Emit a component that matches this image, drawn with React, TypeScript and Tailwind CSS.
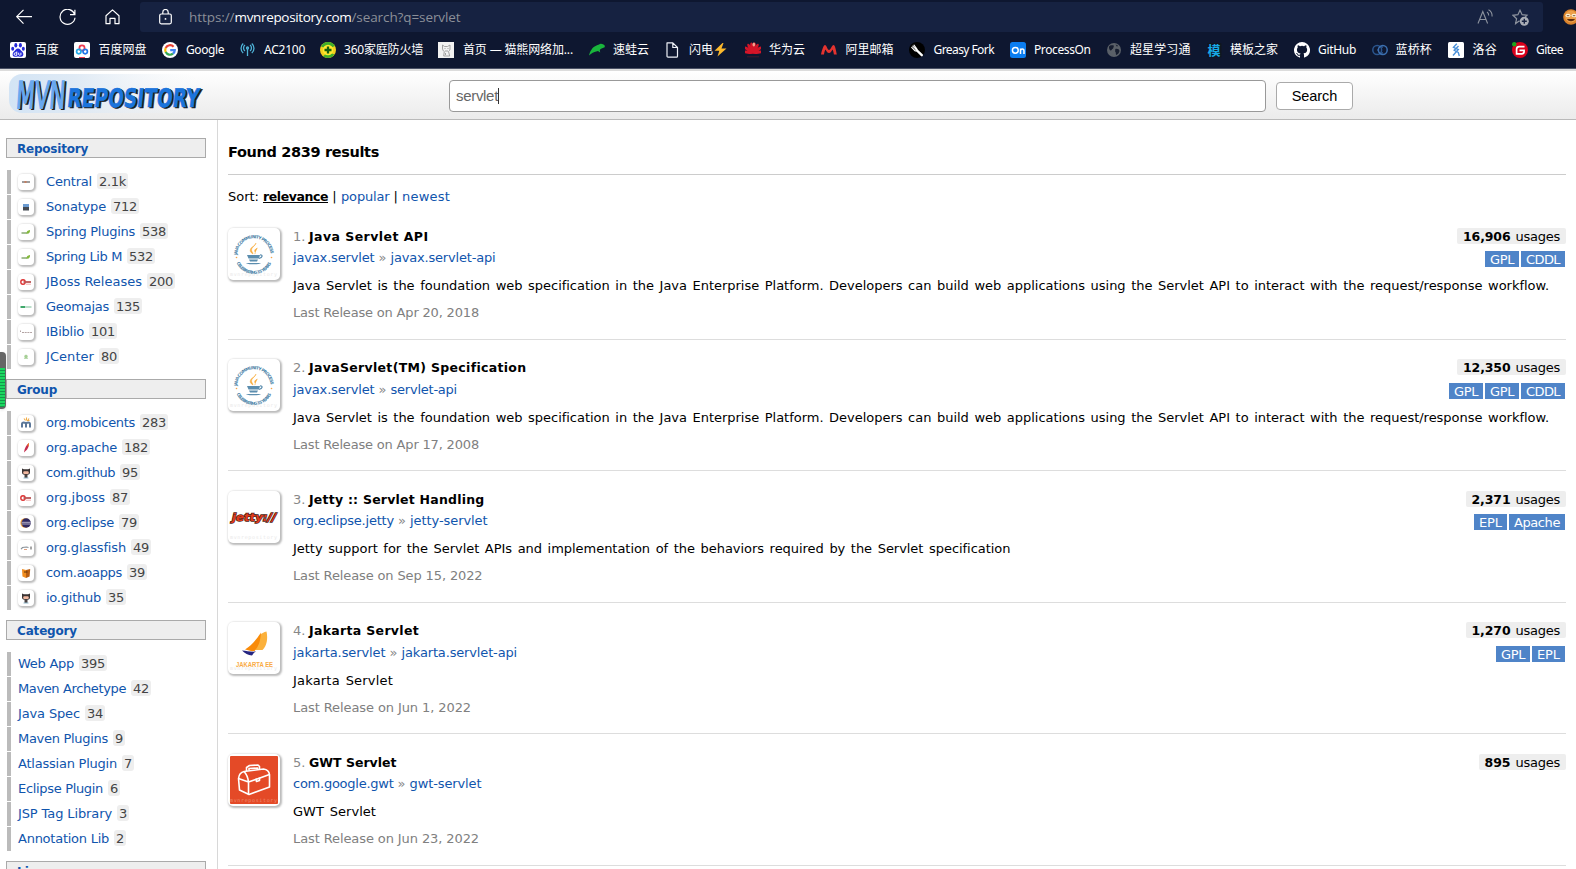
import React, { useLayoutEffect, useRef, useState } from "react";

const LINK = "text-[#1055ad]";

/** Spreads its text over an exact width by adjusting the tracking. */
function FitText({ w, className = "", children }: { w: number; className?: string; children: string }) {
  const ref = useRef<HTMLSpanElement>(null);
  const [spacing, setSpacing] = useState(0);
  useLayoutEffect(() => {
    if (!ref.current) return;
    ref.current.style.letterSpacing = "0px";
    const natural = ref.current.getBoundingClientRect().width;
    const next = (w - natural) / Math.max(1, Array.from(children).length);
    ref.current.style.letterSpacing = next + "px";
    setSpacing(next);
  }, [w, children]);
  return (
    <span className="inline-block shrink-0 whitespace-pre" style={{ width: w }}>
      <span ref={ref} className={className} style={{ letterSpacing: spacing }}>
        {children}
      </span>
    </span>
  );
}

/* ---------- bookmark icons (16 x 16) ---------- */

const bookmarkIcons: Record<string, React.ReactNode> = {
  baidu: (
    <>
      <rect width="16" height="16" rx="2" fill="#fff" />
      <g fill="#2529d8">
        <ellipse cx="5.8" cy="3.2" rx="1.5" ry="2.2" />
        <ellipse cx="10.4" cy="3.2" rx="1.5" ry="2.2" />
        <ellipse cx="2.7" cy="6.8" rx="1.5" ry="2" />
        <ellipse cx="13.3" cy="6.8" rx="1.5" ry="2" />
        <path d="M8 6.4c2 0 2.4 1.8 4 3.2 2.200 2 1.600 5.200-.8 5.200-1.300 0-2-.4-3.200-.4s-1.900.4-3.200.4c-2.400 0-3-3.200-.8-5.200C5.600 8.200 6 6.400 8 6.400z" />
      </g>
      <path d="M6.800 9.500v3.800H5.300a1.200 1.200 0 0 1 0-2.400h1.500M8.700 10.700v1.900c0 .8 2.200.8 2.200 0v-1.900" stroke="#fff" fill="none" />
    </>
  ),
  pan: (
    <>
      <rect width="16" height="16" rx="2" fill="#fff" />
      <circle cx="8" cy="6" r="2.600" fill="none" stroke="#ee3a50" strokeWidth="1.700" />
      <circle cx="4.800" cy="9.600" r="2.200" fill="none" stroke="#22a9e8" strokeWidth="1.700" />
      <circle cx="11.200" cy="9.600" r="2.200" fill="none" stroke="#2377e8" strokeWidth="1.700" />
      <path d="M5 15.500h6" stroke="#ee3a50" />
    </>
  ),
  google: (
    <>
      <circle cx="8" cy="8" r="8" fill="#fff" />
      <g fill="none" strokeWidth="2.200">
        <path d="M11.600 4.700A4.800 4.800 0 0 0 3.700 6" stroke="#ea4335" />
        <path d="M3.700 6a4.800 4.800 0 0 0 0 4.200" stroke="#fbbc05" />
        <path d="M3.700 10.100A4.800 4.800 0 0 0 11 11.700" stroke="#34a853" />
        <path d="M8.200 8.100h4.600a4.800 4.800 0 0 1-1.800 3.600" stroke="#4285f4" />
      </g>
    </>
  ),
  antenna: (
    <g fill="none" stroke="#4fb4d8" strokeWidth="1.300">
      <path d="M7.500 7v7" />
      <circle cx="7.500" cy="6" r="1" />
      <path d="M5 9a3.800 3.800 0 0 1 0-6M10 9a3.800 3.800 0 0 0 0-6M3.200 11a6.400 6.400 0 0 1 0-9.600M11.800 11a6.400 6.400 0 0 0 0-9.600" />
    </g>
  ),
  shield: (
    <>
      <circle cx="8" cy="8" r="8" fill="#f2cf1d" />
      <path d="M1 4.500A8 8 0 0 1 15 4L8 7zM14.500 12.500A8 8 0 0 1 3 14.200L8 10z" fill="#3fae2a" />
      <circle cx="8" cy="8" r="5.200" fill="#ffe92e" />
      <path d="M8 4.500v7M4.500 8h7" stroke="#14600f" strokeWidth="2.300" />
    </>
  ),
  cat: (
    <>
      <rect width="16" height="16" fill="#f2f2f2" />
      <path d="M4.500 6V3l2 1.500h3L12 3v4c0 1.500-1 2-1.500 2.500l1.200 4.500h-6l.6-4.500C5 9 4.500 7.500 4.500 6zM6.500 6.500h1M9.500 6.500h1M7 9h3M7.500 11v2" fill="none" stroke="#999" strokeWidth=".9" />
    </>
  ),
  frog: (
    <path d="M0 13.500C1 9 3.500 4.800 7.500 3.400c1.500-.4 2.500-1.200 4-1.700 1-.2 2 .4 3 .9 1.600.8 1.700 2.600.6 3-1.800.8-3.200.8-4.300 2.400l.4 2.600-2.200-1.500-1.800.4C5 10.300 2.500 11 0 13.500z" fill="#19b53c" />
  ),
  page: (
    <path d="M2 .8h5.800L12.500 5.500v8.700a1 1 0 0 1-1 1H3a1 1 0 0 1-1-1zM7.800.8v4.700h4.700" fill="none" stroke="#eef1f7" strokeWidth="1.200" strokeLinejoin="round" />
  ),
  huawei: (
    <g fill="#d41528">
      {[-82, -55, -30, -10, 10, 30, 55, 82].map((a) => (
        <ellipse key={a} cx="8" cy="5.800" rx="1.600" ry="5.400" transform={`rotate(${a} 8 11)`} />
      ))}
      <path d="M2 14.800h12" stroke="#4d1a2b" strokeWidth=".8" />
      <ellipse cx="8.800" cy="2.600" rx="1.300" ry="2" fill="#f7a08c" />
    </g>
  ),
  ali: <path d="M0 12.500C1 8 2.500 3 4 3s2.500 5 4 5 3-5 4.500-5S15 8 15.800 12.500h-2.900c-.3-2-.7-4-1.400-5C10.500 9.300 9.600 11 8 11S5.500 9.300 4.500 7.500c-.8 1.200-1.200 3-1.500 5z" fill="#e5332f" />,
  fork: (
    <>
      <circle cx="8" cy="8" r="8" fill="#000" />
      <path d="M7.500 8l5.300 5.200" stroke="#fff" strokeWidth="2.400" strokeLinecap="round" />
      <path d="M2.700 5.300L6 8.700c1.200.8 2.600-.6 1.800-1.800L5 3.200M3.800 4.200l3 3" stroke="#fff" strokeWidth="1.100" fill="none" strokeLinecap="round" />
    </>
  ),
  on: (
    <>
      <rect width="16" height="16" rx="2.500" fill="#0b7df0" />
      <circle cx="5.300" cy="8.300" r="2.900" fill="none" stroke="#fff" strokeWidth="1.500" />
      <path d="M10.500 12V6.400M10.500 9c0-2.600 3.500-2.600 3.500 0v3" fill="none" stroke="#fff" strokeWidth="1.500" />
    </>
  ),
  globe: (
    <>
      <circle cx="7" cy="8" r="7" fill="#5a6068" />
      <path d="M2 4.500c1.500-2 3-1 4.500-1.300 1 1.500-.5 2.300-.5 3.500-1.500.2-1 2-2.500 1.800C2.500 8 1.800 6 2 4.500zM8.300 7c2-.6 4 .2 4.200 2-.4 2-2 3.800-3.400 4-.6-1.500.2-2.500-1-3.600zM8.500 2.500l2.500 1-1 1.300z" fill="#161d2f" />
    </>
  ),
  mo: <rect x="0" y="1" width="14.500" height="14.500" rx="1" fill="#10161f" />,
  github: (
    <path
      fill="#fff"
      d="M8 0a8 8 0 0 0-2.530 15.590c.4.070.550-.170.550-.380v-1.490c-2.010.370-2.530-.490-2.690-.940-.090-.230-.480-.940-.820-1.130-.280-.150-.680-.520-.010-.530.630-.010 1.080.580 1.230.820.720 1.210 1.870.870 2.330.660.070-.520.280-.870.510-1.070-1.780-.2-3.640-.890-3.640-3.950 0-.870.310-1.590.820-2.150-.080-.2-.360-1.020.080-2.120 0 0 .670-.210 2.200.820a7.600 7.600 0 0 1 4 0c1.530-1.040 2.200-.820 2.200-.820.440 1.100.160 1.920.080 2.120.510.560.820 1.270.820 2.150 0 3.070-1.870 3.750-3.650 3.950.290.250.540.730.540 1.480v2.200c0 .210.150.460.550.380A8 8 0 0 0 8 0z"
    />
  ),
  rings: (
    <g fill="none" stroke="#3b6fb0" strokeWidth="1.500">
      <circle cx="5.200" cy="8" r="4.400" stroke="#2b568f" />
      <circle cx="10.800" cy="8" r="4.400" />
      <path d="M11 5.200a3.300 3.300 0 1 0 0 5.600" stroke="#3b6fb0" strokeWidth="1" />
    </g>
  ),
  luogu: (
    <>
      <rect width="16" height="16" rx="1.500" fill="#fff" />
      <path d="M8.800 1.800L5.500 5.300l4.800 2.200L5 13.500M5.500 8l4.800 2.500 1 3.500M10.500 4L6 8.500" stroke="#4a90d9" strokeWidth="1.400" fill="none" />
    </>
  ),
  gitee: (
    <>
      <circle cx="8" cy="8" r="8" fill="#d9001b" />
      <path d="M12.500 4.600H7.200A2.600 2.600 0 0 0 4.600 7.200v4.600h5.200a2.300 2.300 0 0 0 2.300-2.300V8.300H7.500" fill="none" stroke="#fff" strokeWidth="1.700" />
      <circle cx="2.200" cy="2.200" r="2.200" fill="#1ba51b" />
    </>
  ),
};

type Bookmark = { icon: string; label: string; x: number; textX: number; end: number };

const bookmarks: Bookmark[] = [
  { icon: "baidu", label: "百度", x: 10, textX: 35, end: 58.500 },
  { icon: "pan", label: "百度网盘", x: 74, textX: 98.500, end: 146.500 },
  { icon: "google", label: "Google", x: 162, textX: 186, end: 224 },
  { icon: "antenna", label: "AC2100", x: 240, textX: 264, end: 305 },
  { icon: "shield", label: "360家庭防火墙", x: 320, textX: 344, end: 423 },
  { icon: "cat", label: "首页 — 猫熊网络加...", x: 438, textX: 463, end: 573 },
  { icon: "frog", label: "速蛙云", x: 589, textX: 613, end: 649 },
  { icon: "page", label: "闪电", x: 665, textX: 689, end: 713 },
  { icon: "huawei", label: "华为云", x: 745, textX: 769, end: 805 },
  { icon: "ali", label: "阿里邮箱", x: 821, textX: 845.500, end: 893.500 },
  { icon: "fork", label: "Greasy Fork", x: 909, textX: 933.500, end: 994 },
  { icon: "on", label: "ProcessOn", x: 1010, textX: 1034, end: 1090.500 },
  { icon: "globe", label: "超星学习通", x: 1107, textX: 1130, end: 1190.500 },
  { icon: "mo", label: "模板之家", x: 1206.500, textX: 1230, end: 1278 },
  { icon: "github", label: "GitHub", x: 1294, textX: 1318, end: 1356 },
  { icon: "rings", label: "蓝桥杯", x: 1372, textX: 1395.500, end: 1432 },
  { icon: "luogu", label: "洛谷", x: 1448, textX: 1472.500, end: 1497 },
  { icon: "gitee", label: "Gitee", x: 1512, textX: 1536, end: 1563 },
];

function BookmarkBar() {
  return (
    <div className="flex h-9 items-center pl-[10px] font-['Noto_Sans','Noto_Sans_CJK_SC',sans-serif] text-[12px] leading-[18px] text-white">
      {bookmarks.map((b, i) => {
        const next = bookmarks[i + 1];
        return (
          <a key={b.label} className="flex shrink-0 items-center" style={{ width: (next ? next.x : 1576) - b.x }}>
            <span className="relative h-4 shrink-0" style={{ width: b.textX - b.x }}>
              <svg width="16" height="16" viewBox="0 0 16 16">
                {bookmarkIcons[b.icon]}
              </svg>
              {b.icon === "mo" && (
                <span className="absolute left-px top-0 text-[13px] font-bold leading-4 text-[#17a9e6]">模</span>
              )}
            </span>
            <FitText w={b.end - b.textX}>{b.label}</FitText>
            {b.icon === "page" && (
              <svg width="13" height="14" viewBox="0 0 13 14" className="ml-px" aria-label="⚡">
                <path d="M8.500 0L0.500 7.800h4.800L3.500 13.500 12.500 5.500H7.500L9.500 0z" fill="#fcb92c" />
              </svg>
            )}
          </a>
        );
      })}
    </div>
  );
}

function AddressBar() {
  return (
    <div className="flex h-8 pt-[2px]">
      <div className="flex w-[140px] shrink-0 items-center pl-4 text-white">
        <svg width="16" height="16" viewBox="0 0 16 16" fill="none" stroke="currentColor" strokeWidth="1.200">
          <path d="M7.500.8L.7 7.700l6.800 6.900M.7 7.700H16" />
        </svg>
        <svg width="17" height="17" viewBox="0 0 17 17" className="ml-[27px]" fill="none" stroke="currentColor" strokeWidth="1.200">
          <path d="M15.700 5.500A7.500 7.500 0 1 0 16 8.700M15.900.800v4.900H11" />
        </svg>
        <svg width="15" height="16" viewBox="0 0 15 16" className="ml-[28.500px]" fill="none" stroke="currentColor" strokeWidth="1.200" strokeLinejoin="round">
          <path d="M1 6.700L7.500.900 14 6.700v8h-4V9.300H5v5.400H1z" />
        </svg>
      </div>
      <div className="flex h-[30px] w-[1403px] shrink-0 items-center rounded-[3px] bg-[#162241] pl-[19px]">
        <svg width="13" height="16" viewBox="0 0 13 16" fill="none" stroke="#fff" strokeWidth="1.200">
          <rect x=".700" y="5" width="11.600" height="9.800" rx="1.500" />
          <path d="M3.800 5V3.200a2.700 2.700 0 0 1 5.400 0V5" />
          <circle cx="6.500" cy="9.900" r=".9" fill="#fff" stroke="none" />
        </svg>
        <div className="ml-[17px] flex font-['Open_Sans',sans-serif] text-[13.500px] leading-5 text-[#8b8f98]">
          <FitText w={45.500}>https://</FitText>
          <FitText w={117} className="text-white">mvnrepository.com</FitText>
          <FitText w={109}>/search?q=servlet</FitText>
        </div>
        <svg width="17" height="16" viewBox="0 0 17 16" className="ml-auto mr-[18px]" fill="none" stroke="#8d939e" strokeWidth="1.100">
          <path d="M1 14.500L5.800 2.500l4.800 12M2.700 10.500h6.200M10 3c1.300.800 1.800 2 1.700 3.500M11.500.7c2.500 1.300 3.800 3.600 3.600 6.800" />
        </svg>
        <svg width="17" height="17" viewBox="0 0 17 17" className="mr-[14px]" fill="none" stroke="#8d939e" strokeWidth="1.200">
          <path d="M7.500 11.800L3.600 14.600 4.600 9.700 1 6.300l4.900-.6L8 1.200l2.100 4.500 4.900.600-1.800 1.700" />
          <circle cx="12.300" cy="12.300" r="4.500" fill="#a9adb5" stroke="none" />
          <path d="M12.300 9.800v5M9.800 12.300h5" stroke="#162241" strokeWidth="1.400" />
        </svg>
      </div>
      <svg width="16" height="16" viewBox="0 0 16 16" className="ml-5 mt-[7px] shrink-0">
        <circle cx="8" cy="8" r="7.800" fill="#d9822b" />
        <circle cx="8" cy="7.500" r="6" fill="#eda04a" />
        <ellipse cx="5" cy="6.500" rx="2.500" ry="1.700" fill="#fff3d6" />
        <ellipse cx="11" cy="6.500" rx="2.500" ry="1.700" fill="#fff3d6" />
        <path d="M4 10c1.500 3 6.500 3 8 0z" fill="#5c2c0e" />
        <path d="M3.800 6.700h2.500M9.800 6.700h2.500" stroke="#5c2c0e" strokeWidth=".8" />
      </svg>
    </div>
  );
}

function SiteLogo() {
  return (
    <svg width="200" height="40" viewBox="0 0 200 40" className="ml-[9px] mt-[3px] shrink-0 overflow-visible">
      <defs>
        <linearGradient id="glow" x1="0" x2="1" y1="0" y2="0">
          <stop offset="0" stopColor="#d3e4f5" />
          <stop offset=".35" stopColor="#dce8f4" stopOpacity=".9" />
          <stop offset="1" stopColor="#f0f4f8" stopOpacity="0" />
        </linearGradient>
      </defs>
      <rect width="190" height="39" rx="13" fill="url(#glow)" />
      <g fontFamily="'DejaVu Sans',sans-serif">
        {[
          { dx: 1.700, dy: 1.200, a: "#1c1c1c", b: "#1c1c1c" },
          { dx: 0, dy: 0, a: "#68a8ef", b: "#1b74dc" },
        ].map((l, i) => (
          <g key={i} transform={`translate(${l.dx} ${l.dy})`}>
            <g transform="translate(6.500 33.500) skewX(-4) scale(1 1.360)">
              <text fontSize="27" textLength="49" lengthAdjust="spacingAndGlyphs" fill={l.a} stroke={l.a} strokeWidth="1.300">
                MVN
              </text>
            </g>
            <g transform="translate(57.500 33.200) skewX(-6)">
              <text fontSize="25.500" textLength="132" lengthAdjust="spacingAndGlyphs" fontWeight="bold" fill={l.b} stroke={l.b} strokeWidth=".700">
                REPOSITORY
              </text>
            </g>
          </g>
        ))}
      </g>
    </svg>
  );
}

function SiteHeader() {
  return (
    <header className="flex h-[51px] border-b border-t-2 border-b-[#b9b9b9] border-t-[#dcdcdc] bg-gradient-to-b from-white to-[#ebebeb] font-['Liberation_Sans',sans-serif] text-[14px]">
      <div className="w-[449px] shrink-0">
        <SiteLogo />
      </div>
      <div className="mt-[9px] flex h-8 w-[817px] shrink-0 items-center rounded-[4px] border border-[#999] bg-white pl-[6px] text-[15px] text-[#666]">
        <FitText w={42}>servlet</FitText>
        <span className="h-4 w-px bg-[#333]" />
      </div>
      <button className="ml-[10px] mt-[11px] flex h-7 w-[77px] shrink-0 items-center justify-center rounded-[4px] border border-[#aaa] bg-white pt-px text-[14.500px] text-black">
        <FitText w={45.500}>Search</FitText>
      </button>
    </header>
  );
}

/* ---------- sidebar ---------- */

const jboss = (
  <>
    <circle cx="5" cy="8" r="2.200" fill="none" stroke="#d33" strokeWidth="1.400" />
    <path d="M5.500 8H13" stroke="#b55" strokeWidth="1.800" />
    <path d="M8 10.200h5" stroke="#e99" strokeWidth=".8" />
  </>
);
const spring = (
  <>
    <path d="M3.500 9h5.500" stroke="#9bb88a" strokeWidth="1.800" />
    <path d="M8.500 9.700c0-2.500 1-3.200 3.500-3.700.2 2-.5 4-3.500 3.700z" fill="#83b93a" />
  </>
);
const octocat = (
  <>
    <path d="M4 3.500l1.800.8h4.400l1.800-.8v4c0 1.500-1 2.500-4 2.500s-4-1-4-2.500z" fill="#3a3333" />
    <rect x="5.200" y="6.200" width="5.600" height="2.700" rx="1.200" fill="#f1b8a0" />
    <path d="M6.500 10h3v3h-3z" fill="#4a4242" />
    <path d="M5.500 13h5" stroke="#8fb8cc" />
  </>
);

const miniIcons: Record<string, React.ReactNode> = {
  maven: (
    <>
      <path d="M4 8h8" stroke="#8c8c8c" strokeWidth="1.700" />
      <path d="M6.500 8h2" stroke="#cf7a55" strokeWidth="1.700" />
    </>
  ),
  sonatype: (
    <>
      <rect x="5" y="5" width="6" height="3" fill="#6b9bd1" />
      <rect x="5" y="8" width="6" height="3.500" fill="#454a52" />
    </>
  ),
  spring,
  jboss,
  geomajas: (
    <>
      <path d="M2.500 8H7" stroke="#3fa86b" strokeWidth="2" />
      <path d="M7 8h6.500" stroke="#a9d6bb" strokeWidth="1.600" />
    </>
  ),
  ibiblio: <path d="M2.500 6.500v1.500M4 8.500h10" stroke="#b3a3a3" strokeDasharray="2 .7" />,
  jcenter: <path d="M8 5.500l2 1.600-.8 1.200 1 1.500H5.800l1-1.500L6 7.100z" fill="#a5cf95" />,
  mobicents: (
    <>
      <path d="M4 12.500V9c0-2 3.500-2 4 0v3.500M8 9c.5-2 4-2 4 0v3.500" stroke="#5b7799" strokeWidth="2" fill="none" />
      <path d="M6 3.500l1.500 2M8.500 2.500v3M11 3.500L9.500 6M11.500 5.500H9" stroke="#f0ab45" strokeWidth="1.100" />
    </>
  ),
  apache: (
    <>
      <path d="M6 12.500C6.500 8 8.500 4.500 11 3c.300 2-1 6.500-3.500 8z" fill="#c42a4c" />
      <path d="M9.500 4.500c1-1.200 1.500-1.500 1.500-1.500.2 1.500-.5 3-1 4z" fill="#f08a2c" />
    </>
  ),
  octocat,
  eclipse: (
    <>
      <circle cx="7.200" cy="8" r="4.800" fill="#f2a13a" />
      <circle cx="8.200" cy="8" r="4.700" fill="#2f2860" />
      <path d="M3.700 7.300h9M3.700 9h9" stroke="#d5d2e2" strokeWidth=".800" />
    </>
  ),
  glassfish: (
    <>
      <path d="M3 9.200L4.500 7.500l4-.5 2 .5" stroke="#8a9299" fill="none" strokeWidth="1.200" />
      <path d="M6 9.500h3" stroke="#e0a080" />
      <path d="M13 6.500v3" stroke="#777" strokeWidth="1.300" />
    </>
  ),
  ao: (
    <>
      <path d="M4 4l4 1v8l-3.500-1.500z" fill="#f08c1e" />
      <path d="M8 5l4.200-1-.6 7.500L8 13z" fill="#b85c10" />
      <path d="M6 7h3.500" stroke="#5a3008" />
    </>
  ),
};

type Facet = { icon?: string; label: string; count: string; badgeX: number };

const facets: { title: string; titleWidth: number; items: Facet[] }[] = [
  {
    title: "Repository",
    titleWidth: 71,
    items: [
      { icon: "maven", label: "Central", count: "2.1k", badgeX: 97 },
      { icon: "sonatype", label: "Sonatype", count: "712", badgeX: 111 },
      { icon: "spring", label: "Spring Plugins", count: "538", badgeX: 140 },
      { icon: "spring", label: "Spring Lib M", count: "532", badgeX: 127 },
      { icon: "jboss", label: "JBoss Releases", count: "200", badgeX: 147 },
      { icon: "geomajas", label: "Geomajas", count: "135", badgeX: 114 },
      { icon: "ibiblio", label: "IBiblio", count: "101", badgeX: 89 },
      { icon: "jcenter", label: "JCenter", count: "80", badgeX: 99 },
    ],
  },
  {
    title: "Group",
    titleWidth: 40,
    items: [
      { icon: "mobicents", label: "org.mobicents", count: "283", badgeX: 140 },
      { icon: "apache", label: "org.apache", count: "182", badgeX: 122 },
      { icon: "octocat", label: "com.github", count: "95", badgeX: 120 },
      { icon: "jboss", label: "org.jboss", count: "87", badgeX: 110 },
      { icon: "eclipse", label: "org.eclipse", count: "79", badgeX: 119 },
      { icon: "glassfish", label: "org.glassfish", count: "49", badgeX: 131 },
      { icon: "ao", label: "com.aoapps", count: "39", badgeX: 127 },
      { icon: "octocat", label: "io.github", count: "35", badgeX: 106 },
    ],
  },
  {
    title: "Category",
    titleWidth: 60,
    items: [
      { label: "Web App", count: "395", badgeX: 79 },
      { label: "Maven Archetype", count: "42", badgeX: 131 },
      { label: "Java Spec", count: "34", badgeX: 85 },
      { label: "Maven Plugins", count: "9", badgeX: 113 },
      { label: "Atlassian Plugin", count: "7", badgeX: 122 },
      { label: "Eclipse Plugin", count: "6", badgeX: 108 },
      { label: "JSP Tag Library", count: "3", badgeX: 117 },
      { label: "Annotation Lib", count: "2", badgeX: 114 },
    ],
  },
  { title: "License", titleWidth: 52, items: [] },
];

function Sidebar() {
  return (
    <aside className="w-[218px] shrink-0 border-r border-[#d8d8d8] pl-[6px] pt-[18px] text-[13px]">
      {facets.map((f) => (
        <section key={f.title} className="mb-[9px]">
          <h3 className={`h-5 w-[200px] border border-[#aaa] bg-[#eee] pl-[10px] text-[12px] font-bold leading-[20px] ${LINK}`}>
            <FitText w={f.titleWidth}>{f.title}</FitText>
          </h3>
          <ul className="ml-px flex flex-col pt-3">
            {f.items.map((it) => (
              <li key={it.label} className="flex h-[25px] border-b border-white">
                <span className="w-1 shrink-0 bg-[#bbb]" />
                {it.icon && (
                  <span className="ml-[7px] mr-3 mt-1 h-4 w-4 shrink-0 rounded-[4px] bg-white shadow-[1px_1px_2px_1px_#bbb]">
                    <svg width="16" height="16" viewBox="0 0 16 16">
                      {miniIcons[it.icon]}
                    </svg>
                  </span>
                )}
                <a className={`mt-[3px] flex leading-[17px] ${LINK} ${it.icon ? "" : "ml-[7px]"}`}>
                  <FitText w={it.badgeX - 5 - (it.icon ? 46 : 18)}>{it.label}</FitText>
                </a>
                <span className="ml-[5px] mt-[3px] h-4 shrink-0 rounded-[3px] bg-[#eee] px-[2px] leading-[17px] text-[#444]">
                  <FitText w={it.count.includes("k") ? 27 : it.count.length * 8}>{it.count}</FitText>
                </span>
              </li>
            ))}
          </ul>
        </section>
      ))}
    </aside>
  );
}

/* ---------- results ---------- */

const jcp = (
  <>
    <defs>
      <path id="jcpTop" d="M9.300 27a16.700 16.700 0 0 1 33.400 0" />
      <path id="jcpBottom" d="M7 27a19 19 0 0 0 38 0" />
    </defs>
    <g fontFamily="'DejaVu Sans',sans-serif" fontWeight="bold" fontSize="4.300" fill="#4b83a8">
      <text>
        <textPath href="#jcpTop" textLength="51">JAVA COMMUNITY PROCESS</textPath>
      </text>
      <text>
        <textPath href="#jcpBottom" startOffset="8" textLength="43">CELEBRATING 15 YEARS</textPath>
      </text>
    </g>
    <circle cx="8.500" cy="29.500" r=".8" fill="#f5a54a" />
    <circle cx="43.500" cy="29.500" r=".8" fill="#f5a54a" />
    <path d="M28 15c-.5 3-4.500 4-4.500 7 0 1.700 1.500 2 1.500 4-2.500-1.500-3.500-3-2.300-5.300 1-2 4.700-3 5.300-5.700zM29.500 20c-2.500 1-3.500 2.500-2.500 4 .5 1 .2 1.500-.5 2.200" fill="#f8ac3c" stroke="#f8ac3c" strokeWidth=".5" />
    <path d="M19 27h13l-1 3.500H20.500zM21 31.500h9l-1 2h-7zM18 35h15c-1 1.800-14 1.800-15 0z" fill="#5b8dae" />
    <path d="M32 27c3-.6 3 2.600-1 3.500" stroke="#5b8dae" fill="none" strokeWidth="1.200" />
  </>
);

const artwork: Record<string, React.ReactNode> = {
  jcp,
  jetty: (
    <g fontFamily="'DejaVu Sans',sans-serif" fontWeight="bold" fontSize="11" fontStyle="italic">
      <text x="4" y="29.500" textLength="44" lengthAdjust="spacingAndGlyphs" fill="#e23a1b" stroke="#4a2418" strokeWidth="1.400" paintOrder="stroke">
        jetty://
      </text>
    </g>
  ),
  jakarta: (
    <>
      <path d="M31 13c2.500-1.500 5-3 7.500-3.500C40 16 39 24 34.500 28L27 28z" fill="#fbb13c" />
      <path d="M33 10.500c-.5 8-2 13.500-6.500 18.500-3 .5-6-.500-9.500-1.500C23 24 29 17 33 10.500z" fill="#f98b0a" />
      <path d="M14 28.500c5 .5 9 1.500 14 1-2 1-3 2.500-4 4-4-.5-7-2-10-5z" fill="#252580" />
      <text x="8" y="44.500" textLength="37" lengthAdjust="spacingAndGlyphs" fontSize="7" fontWeight="bold" fontFamily="'Liberation Sans',sans-serif" fill="#f8ab45">
        JAKARTA EE
      </text>
    </>
  ),
  gwt: (
    <>
      <rect x="2" y="2" width="48" height="48" rx="1" fill="#e44a27" />
      <g fill="none" stroke="#fff" strokeWidth="1.600" strokeLinejoin="round">
        <path d="M10.500 24.500c.500-4 3-6.500 5.500-7L35.500 15c3 .5 5.500 2 6 5.500V33L21 40.500 11.500 36z" />
        <path d="M10.500 24.500l10 3.500L41.500 20.500M20.500 28v12.500M20.500 28c-.5-4-2-8-4.500-10.500" />
        <path d="M18.500 17v-3.500l3-2 8.500-.5 1.500 1.500v3M21 16.500v-2l8.500-.500v1.500" />
        <path d="M28 24.500l.5 3 3-1v-3" />
      </g>
    </>
  ),
};

type Result = {
  name: string;
  nameW: number;
  group: string;
  groupW: number;
  artifact: string;
  artifactW: number;
  description: string;
  descriptionW: number;
  date: string;
  dateW: number;
  art: string;
  usages: string;
  usagesW: number;
  licenses: string[];
  row: string;
  head: string;
  tags: string;
};

const JAVA_TEXT =
  "Java Servlet is the foundation web specification in the Java Enterprise Platform. Developers can build web applications using the Servlet API to interact with the request/response workflow.";

const results: Result[] = [
  {
    name: "Java Servlet API", nameW: 119.500, group: "javax.servlet", groupW: 81.500, artifact: "javax.servlet-api", artifactW: 105,
    description: JAVA_TEXT, descriptionW: 1256, date: "Apr 20, 2018", dateW: 186, art: "jcp", usages: "16,906", usagesW: 47.500,
    licenses: ["GPL", "CDDL"], row: "h-[131px] pt-[19px]", head: "h-[38px]", tags: "mt-[7px]",
  },
  {
    name: "JavaServlet(TM) Specification", nameW: 217, group: "javax.servlet", groupW: 81.500, artifact: "servlet-api", artifactW: 66.500,
    description: JAVA_TEXT, descriptionW: 1256, date: "Apr 17, 2008", dateW: 186, art: "jcp", usages: "12,350", usagesW: 47.500,
    licenses: ["GPL", "GPL", "CDDL"], row: "h-[131px] pt-[19px]", head: "h-[39px]", tags: "mt-2",
  },
  {
    name: "Jetty :: Servlet Handling", nameW: 175.500, group: "org.eclipse.jetty", groupW: 101, artifact: "jetty-servlet", artifactW: 77.500,
    description: "Jetty support for the Servlet APIs and implementation of the behaviors required by the Servlet specification",
    descriptionW: 717.500, date: "Sep 15, 2022", dateW: 189.500, art: "jetty", usages: "2,371", usagesW: 39,
    licenses: ["EPL", "Apache"], row: "h-[132px] pt-5", head: "h-[38px]", tags: "mt-[7px]",
  },
  {
    name: "Jakarta Servlet", nameW: 110, group: "jakarta.servlet", groupW: 92.500, artifact: "jakarta.servlet-api", artifactW: 115.500,
    description: "Jakarta Servlet", descriptionW: 100, date: "Jun 1, 2022", dateW: 178, art: "jakarta", usages: "1,270", usagesW: 39,
    licenses: ["GPL", "EPL"], row: "h-[131px] pt-[19px]", head: "h-[39px]", tags: "mt-2",
  },
  {
    name: "GWT Servlet", nameW: 87.500, group: "com.google.gwt", groupW: 100.500, artifact: "gwt-servlet", artifactW: 72,
    description: "GWT Servlet", descriptionW: 83, date: "Jun 23, 2022", dateW: 186, art: "gwt", usages: "895", usagesW: 26,
    licenses: [], row: "h-[132px] pt-5", head: "h-[38px]", tags: "mt-[7px]",
  },
];

const licenseWidth: Record<string, number> = { GPL: 24, CDDL: 34, EPL: 23, Apache: 46 };

function ResultRow({ r, index }: { r: Result; index: number }) {
  return (
    <article className={`flex border-b border-[#ddd] ${r.row}`}>
      <div className="mr-[13px] h-[52px] w-[52px] shrink-0 rounded-[5px] bg-white shadow-[1px_1px_2px_1px_#bbb]">
        <svg width="52" height="52" viewBox="0 0 52 52">
          {artwork[r.art]}
          <text x="2" y="47.500" textLength="47" fontSize="5" fontFamily="'DejaVu Sans Mono',monospace" fill={r.art === "gwt" ? "#ee8a70" : "#e9e9e9"}>
            mvnrepository
          </text>
        </svg>
      </div>
      <div className="min-w-0 flex-1 leading-[17px]">
        <div className={`flex justify-between ${r.head}`}>
          <div className="flex flex-col justify-between">
            <h2 className="flex h-[17px]">
              <span className="w-4 shrink-0 text-[#888]">{index + 1}.</span>
              <FitText w={r.nameW} className="text-[12.500px] font-bold">{r.name}</FitText>
            </h2>
            <p className={`flex h-[17px] ${LINK}`}>
              <FitText w={r.groupW}>{r.group}</FitText>
              <span className="w-4 shrink-0 text-center text-[13px] text-[#888]">»</span>
              <FitText w={r.artifactW}>{r.artifact}</FitText>
            </p>
          </div>
          <div className="flex flex-col items-end">
            <span className="flex h-4 gap-[5px] rounded-[2px] bg-[#eee] px-[6px]">
              <FitText w={r.usagesW} className="text-[12.500px] font-bold">{r.usages}</FitText>
              <FitText w={44.500}>usages</FitText>
            </span>
            <div className={`flex gap-[2px] pr-px text-white ${r.tags}`}>
              {r.licenses.map((l, i) => (
                <span key={i} className="h-4 bg-[#4f84c8] px-[5px]">
                  <FitText w={licenseWidth[l]}>{l}</FitText>
                </span>
              ))}
            </div>
          </div>
        </div>
        <p className="mt-[11px] h-[17px] [word-spacing:1.500px]">
          <FitText w={r.descriptionW}>{r.description}</FitText>
        </p>
        <p className="mt-[10px] h-[17px] text-[#808080]">
          <FitText w={r.dateW}>{`Last Release on ${r.date}`}</FitText>
        </p>
      </div>
    </article>
  );
}

export default function App() {
  return (
    <div className="relative flex h-[869px] w-[1576px] flex-col overflow-hidden bg-white">
      <div className="h-[69px] shrink-0 border-b border-[#4a5165] bg-[#0e1730]">
        <AddressBar />
        <BookmarkBar />
      </div>
      <div className="shrink-0">
        <SiteHeader />
      </div>
      <div className="flex min-h-0 flex-1 overflow-hidden font-['DejaVu_Sans',sans-serif] text-[13px] text-black">
        <Sidebar />
        <main className="w-[1348px] shrink-0 pl-[10px] pt-[22px]">
          <h1 className="h-5 text-[14.500px] font-bold leading-5">
            <FitText w={151}>Found 2839 results</FitText>
          </h1>
          <div className="mt-3 border-t border-[#ccc]" />
          <div className="mb-1 mt-[13px] flex h-[17px] leading-[17px]">
            <FitText w={35}>Sort: </FitText>
            <a>
              <FitText w={65} className="text-[12.500px] font-bold underline">relevance</FitText>
            </a>
            <span className="w-[13px] text-center">|</span>
            <a className={LINK}><FitText w={48.500}>popular</FitText></a>
            <span className="w-[12.500px] text-center">|</span>
            <a className={LINK}><FitText w={48}>newest</FitText></a>
          </div>
          {results.map((r, i) => (
            <ResultRow key={r.name} r={r} index={i} />
          ))}
        </main>
      </div>
      <div className="absolute left-0 top-[352px] h-[57px] w-[6px] overflow-hidden rounded-r-[4px] border-b-2 border-r border-t-[16px] border-[#666] bg-[repeating-linear-gradient(#1bd760_0px,#1bd760_2px,#12984a_2px,#12984a_3px)] shadow-sm" />
    </div>
  );
}
